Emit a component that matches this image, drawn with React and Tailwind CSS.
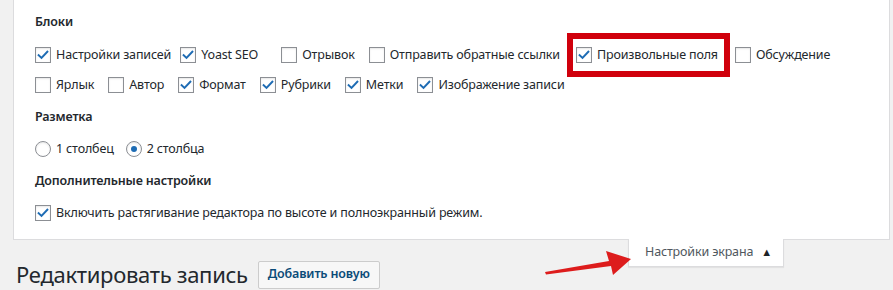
import React from 'react';

const font = { fontFamily: '"Noto Sans", "Open Sans", sans-serif' };

function Check({ checked }) {
  return (
    <span className="w-4 h-4 border border-[#8c8f94] bg-white flex items-center justify-center shrink-0 shadow-[inset_0_1px_2px_rgba(0,0,0,0.1)]">
      {checked && (
        <svg viewBox="0 0 16 16" className="w-[14px] h-[14px]">
          <path d="M3 8.2 L6.3 11.4 L13 4.2" fill="none" stroke="#1e6cb4" strokeWidth="2.2" strokeLinecap="square" />
        </svg>
      )}
    </span>
  );
}

function Radio({ checked }) {
  return (
    <span className="w-4 h-4 rounded-full border border-[#8c8f94] bg-white flex items-center justify-center shrink-0 shadow-[inset_0_1px_2px_rgba(0,0,0,0.1)]">
      {checked && <span className="w-[6px] h-[6px] rounded-full bg-[#1e6cb4]" />}
    </span>
  );
}

function Item({ label, checked, radio, boxed, mr = 'mr-[14px]' }) {
  return (
    <label className={`relative flex items-center gap-[5px] ${mr} whitespace-nowrap text-[12.5px] tracking-[-0.15px] text-[#23282d]`}>
      {radio ? <Radio checked={checked} /> : <Check checked={checked} />}
      <span>{label}</span>
      {boxed && (
        <span className="absolute left-[-9px] right-[-12px] top-[-13px] bottom-[-13px] border-[6px] border-[#d0000c]" />
      )}
    </label>
  );
}

// right margins tuned per item so the row lines up with the screenshot
const row1 = [
  ['Настройки записей', true, false, 'mr-[9px]'],
  ['Yoast SEO', true, false, 'mr-[23px]'],
  ['Отрывок', false, false, 'mr-[14px]'],
  ['Отправить обратные ссылки', false, false, 'mr-[16px]'],
  ['Произвольные поля', true, true, 'mr-[17px]'],
  ['Обсуждение', false, false, 'mr-[14px]'],
];

const row2 = [
  ['Ярлык', false],
  ['Автор', false],
  ['Формат', true],
  ['Рубрики', true],
  ['Метки', true],
  ['Изображение записи', true],
];

const head = 'h-6 flex items-center text-[12.5px] tracking-[-0.15px] font-semibold text-[#23282d]';

export default function App() {
  return (
    <div className="relative w-[893px] h-[290px] bg-[#f1f1f1] overflow-hidden" style={font}>
      <div className="ml-[13px] w-[877px] bg-white border-x border-b border-[#dcdcde] px-[21px] pt-[10px] pb-[11px]">
        <h5 className={head}>Блоки</h5>
        <div className="mt-[6px] h-[30px] flex items-center">
          {row1.map(([l, c, b, m]) => (
            <Item key={l} label={l} checked={c} boxed={b} mr={m} />
          ))}
        </div>
        <div className="h-[30px] flex items-center">
          {row2.map(([l, c]) => (
            <Item key={l} label={l} checked={c} />
          ))}
        </div>
        <h5 className={`mt-[5px] ${head}`}>Разметка</h5>
        <div className="mt-[5px] h-[30px] flex items-center">
          <Item label="1 столбец" radio mr="mr-[12px]" />
          <Item label="2 столбца" radio checked />
        </div>
        <h5 className={`mt-[5px] ${head}`}>Дополнительные настройки</h5>
        <div className="mt-[5px] h-[30px] flex items-center">
          <Item label="Включить растягивание редактора по высоте и полноэкранный режим." checked />
        </div>
      </div>

      <div className="flex">
        <div className="flex items-center ml-[16px] mt-[20px] gap-[10px]">
          <h1 className="text-[22px] tracking-[-0.3px] leading-[29px] text-[#23282d]">Редактировать запись</h1>
          <span className="h-[28px] px-[9px] flex items-center border border-[#ccc] rounded-[2px] bg-[#f7f7f7] text-[12.5px] tracking-[-0.15px] font-semibold text-[#0a4b78]">
            Добавить новую
          </span>
        </div>
        <div className="ml-auto mr-[109px] h-[28px] w-[156px] bg-white border-x border-b border-[#dcdcde] shadow-[0_1px_1px_rgba(0,0,0,0.06)] flex items-center pl-[16px] gap-[8px] text-[12.5px] tracking-[-0.15px] text-[#50575e] -mt-px">
          <span>Настройки экрана</span>
          <span className="text-[11px] text-[#1d2327]">▲</span>
        </div>
      </div>

      <svg className="absolute left-0 top-0 pointer-events-none" width="893" height="290">
        <polygon
          points="545,272 609,261 606,251 631,259 613,275 611,266 546,274.5"
          fill="#dd1c1c"
        />
      </svg>
    </div>
  );
}
